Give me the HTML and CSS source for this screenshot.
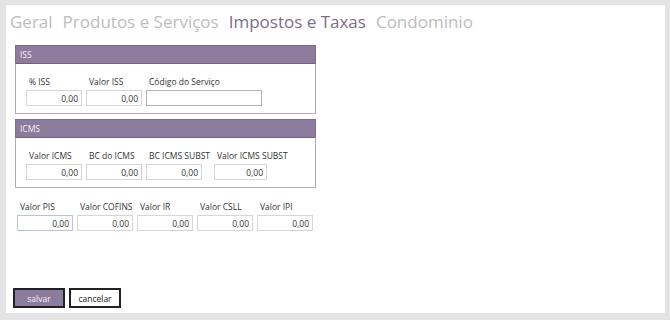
FILE: index.html
```html
<!DOCTYPE html>
<html>
  <head>
    <meta charset="utf-8">
    <link rel="stylesheet" href="styles.css">
  </head>
  <body>
    <div class="panel">
      <div class="tabs">
        <span class="tab">Geral</span>
        <span class="tab">Produtos e Serviços</span>
        <span class="tab active">Impostos e Taxas</span>
        <span class="tab">Condominio</span>
      </div>

      <div class="group">
        <div class="group-title">ISS</div>
        <div class="group-body">
          <div class="field">
            <label>% ISS</label>
            <input type="text" value="0,00">
          </div>
          <div class="field">
            <label>Valor ISS</label>
            <input type="text" value="0,00">
          </div>
          <div class="field">
            <label>Código do Serviço</label>
            <input type="text" class="wide" value="">
          </div>
        </div>
      </div>

      <div class="group">
        <div class="group-title">ICMS</div>
        <div class="group-body">
          <div class="field">
            <label>Valor ICMS</label>
            <input type="text" value="0,00">
          </div>
          <div class="field">
            <label>BC do ICMS</label>
            <input type="text" value="0,00">
          </div>
          <div class="field">
            <label>BC ICMS SUBST</label>
            <input type="text" value="0,00">
          </div>
          <div class="field">
            <label>Valor ICMS SUBST</label>
            <input type="text" class="narrow" value="0,00">
          </div>
        </div>
      </div>

      <div class="row">
        <div class="field">
          <label>Valor PIS</label>
          <input type="text" class="focus" value="0,00">
        </div>
        <div class="field">
          <label>Valor COFINS</label>
          <input type="text" value="0,00">
        </div>
        <div class="field">
          <label>Valor IR</label>
          <input type="text" value="0,00">
        </div>
        <div class="field">
          <label>Valor CSLL</label>
          <input type="text" value="0,00">
        </div>
        <div class="field">
          <label>Valor IPI</label>
          <input type="text" value="0,00">
        </div>
      </div>

      <div class="actions">
        <button class="btn btn-save">salvar</button>
        <button class="btn btn-cancel">cancelar</button>
      </div>
    </div>
  </body>
</html>
```

FILE: styles.css
```css
body {
  margin: 0;
  padding: 5px 5px 7px 6px;
  background-color: #e4e4e4;
  font-family: "Open Sans", "Noto Sans", sans-serif;
  color: #333;
}
.panel {
  background-color: white;
  height: 308px;
  box-sizing: border-box;
  padding: 5px 0 0 4px;
  display: flex;
  flex-direction: column;
}
.tabs {
  display: flex;
  gap: 10px;
  font-size: 17px;
  line-height: 24px;
  color: #bdbdbd;
  height: 29px;
}
.tab.active {
  color: #7d6d8a;
}
.group {
  margin: 6px 0 0 5px;
  width: 301px;
}
.group + .group {
  margin-top: 5px;
}
.group-title {
  background-color: #8d7b9e;
  color: #f4f0f7;
  font-size: 8.5px;
  height: 17px;
  line-height: 17px;
  padding-left: 4px;
  border: 1px solid #7d6b8e;
  border-bottom: none;
}
.group-body {
  border: 1px solid #b3a9bb;
  border-top: 1px solid #6f5f80;
  display: flex;
  gap: 4px;
  padding: 12px 0 7px 10px;
}
.field {
  display: flex;
  flex-direction: column;
}
.field label {
  font-size: 8.5px;
  line-height: 12px;
  height: 14px;
  padding-left: 3px;
  white-space: nowrap;
}
.field input {
  width: 56px;
  height: 16px;
  box-sizing: border-box;
  border: 1px solid #d6d6d6;
  font-family: inherit;
  font-size: 8.5px;
  color: #333;
  text-align: right;
  padding: 0 3px;
  margin: 0;
}
.field input.wide {
  width: 116px;
  border-color: #b5b5b5;
}
.field input.narrow {
  width: 53px;
}
.field input.focus {
  border-color: #b9c4d6;
}
.row {
  display: flex;
  gap: 4px;
  margin: 13px 0 0 7px;
}
.actions {
  margin-top: auto;
  margin-bottom: 5px;
  display: flex;
  gap: 4px;
  padding-left: 3px;
}
.btn {
  height: 20px;
  box-sizing: border-box;
  border: 2px solid #222;
  font-family: inherit;
  font-size: 8.5px;
  padding: 0;
  cursor: pointer;
}
.btn-save {
  width: 52px;
  background-color: #8d7b9e;
  color: #f4f0f7;
}
.btn-cancel {
  width: 52px;
  background-color: white;
  color: #222;
}
```
